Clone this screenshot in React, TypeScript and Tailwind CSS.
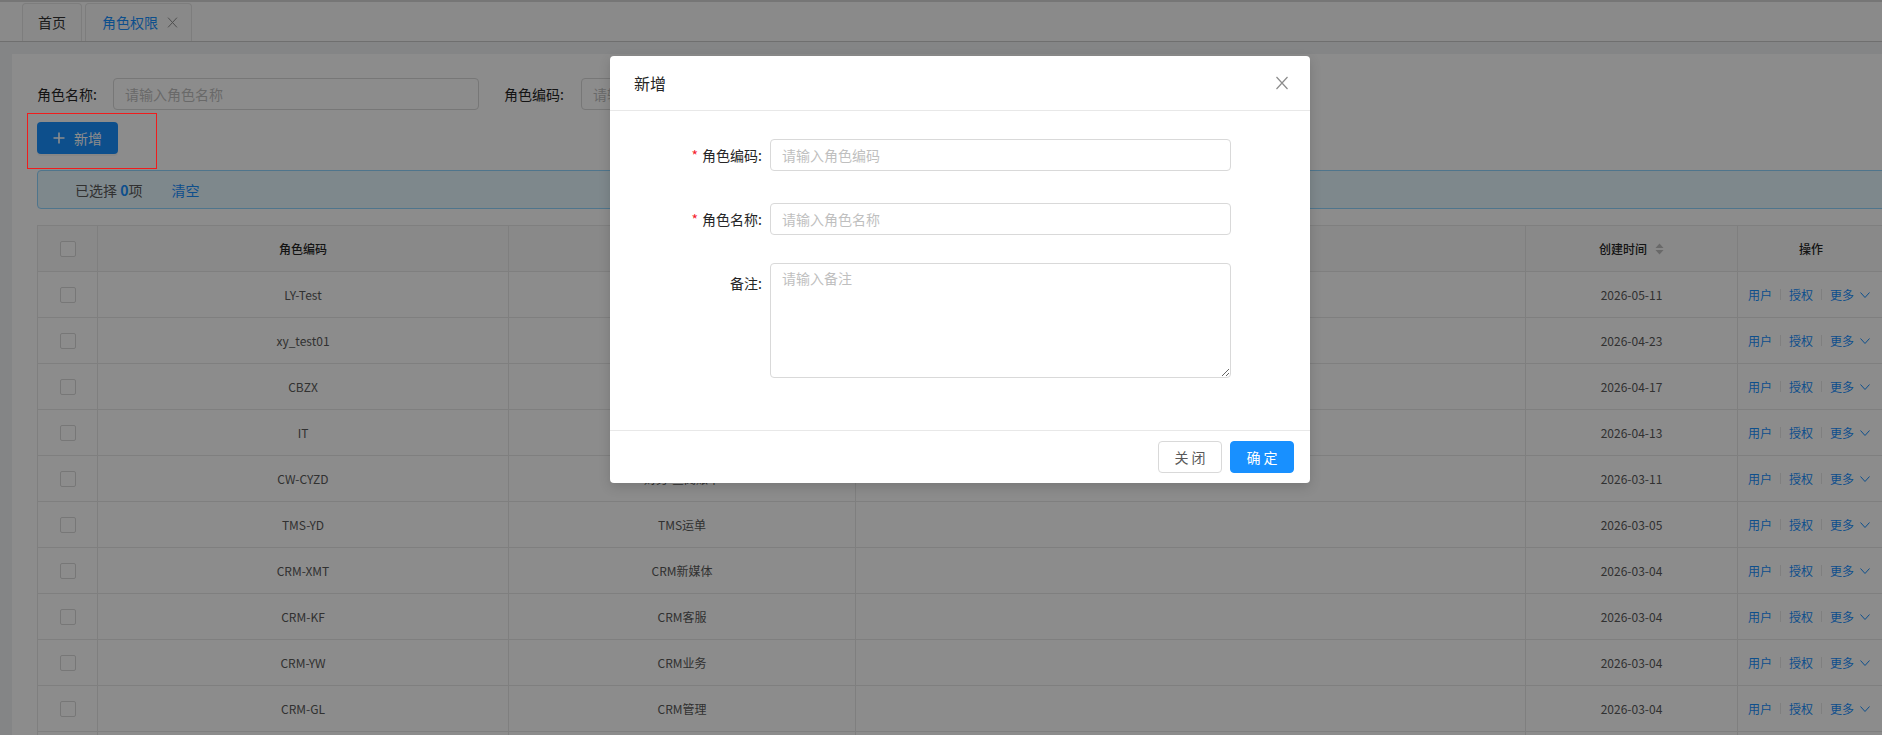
import React from "react";

interface RoleRow {
    code: string;
    name: string;
    desc?: string;
    time: string;
}

const rows: RoleRow[] = [
    { code: "LY-Test", name: "LY测试", time: "2026-05-11" },
    { code: "xy_test01", name: "xy测试", time: "2026-04-23" },
    { code: "CBZX", name: "成本中心", desc: "成本中心角色，负责成本核算、费用归集与成本分析报表的查看和导出", time: "2026-04-17" },
    { code: "IT", name: "IT", time: "2026-04-13" },
    { code: "CW-CYZD", name: "财务-查阅账单", time: "2026-03-11" },
    { code: "TMS-YD", name: "TMS运单", time: "2026-03-05" },
    { code: "CRM-XMT", name: "CRM新媒体", time: "2026-03-04" },
    { code: "CRM-KF", name: "CRM客服", time: "2026-03-04" },
    { code: "CRM-YW", name: "CRM业务", time: "2026-03-04" },
    { code: "CRM-GL", name: "CRM管理", time: "2026-03-04" },
    { code: "CRM-ZJ", name: "CRM总监", time: "2026-03-04" },
];

const Checkbox = () => (
    <span className="inline-block h-4 w-4 rounded-[2px] border border-[#d9d9d9] bg-white" />
);

const SortIcon = () => (
    <svg width="9" height="12" viewBox="0 0 9 12" className="ml-2">
        <path d="M4.5 0.5 L8.5 5 L0.5 5 Z" fill="#bfbfbf" />
        <path d="M4.5 11.5 L8.5 7 L0.5 7 Z" fill="#bfbfbf" />
    </svg>
);

const ChevronDown = () => (
    <svg width="10" height="6" viewBox="0 0 10 6" className="ml-1.5">
        <polyline points="0.5,0.5 5,5.5 9.5,0.5" fill="none" stroke="#1890ff" strokeWidth="1" />
    </svg>
);

const CloseIcon = ({ size, color }: { size: number; color: string }) => (
    <svg width={size} height={size} viewBox="0 0 16 16">
        <path d="M2.5 2 L13.5 14 M13.5 2 L2.5 14" stroke={color} strokeWidth="1.2" fill="none" />
    </svg>
);

const TableRow = ({ row }: { row: RoleRow }) => (
    <div className="flex h-[46px] border-b border-[#e8e8e8] text-xs text-[#595959]">
        <div className="flex w-[60px] shrink-0 items-center justify-center border-r border-[#e8e8e8]">
            <Checkbox />
        </div>
        <div className="flex w-[411px] shrink-0 items-center justify-center border-r border-[#e8e8e8]">{row.code}</div>
        <div className="flex w-[347px] shrink-0 items-center justify-center border-r border-[#e8e8e8]">{row.name}</div>
        <div className="flex w-[670px] shrink-0 items-center justify-center border-r border-[#e8e8e8]">
            {row.desc && <span className="inline-block max-w-[250px] truncate">{row.desc}</span>}
        </div>
        <div className="flex w-[212px] shrink-0 items-center justify-center border-r border-[#e8e8e8]">{row.time}</div>
        <div className="flex w-[146px] shrink-0 items-center justify-center pr-1 text-[#1890ff]">
            <span>用户</span>
            <span className="mx-2 h-[11px] w-px bg-[#e8e8e8]" />
            <span>授权</span>
            <span className="mx-2 h-[11px] w-px bg-[#e8e8e8]" />
            <span>更多</span>
            <ChevronDown />
        </div>
    </div>
);

const FormItem = ({ label, required, children, top }: { label: string; required?: boolean; children: React.ReactNode; top?: boolean }) => (
    <div className={`mb-6 flex ${top ? "items-start" : "items-center"}`}>
        <label className="flex h-10 w-[136px] shrink-0 items-center justify-end pr-2 text-sm text-[#262626]">
            {required && <span className="mr-1 text-sm text-[#f5222d]">*</span>}
            {label}:
        </label>
        <div className="w-[461px]">{children}</div>
    </div>
);

export default function App() {
    return (
        <div className="relative h-[735px] w-[1882px] overflow-hidden bg-[#f0f2f5] font-['Noto_Sans_CJK_SC','Noto_Sans',sans-serif]">
            {/* Tab bar */}
            <div className="flex h-[42px] items-end gap-[3px] border-t-2 border-b border-t-[#d7d7d7] border-b-[#cacaca] bg-[#fcfcfc] pl-[22px]">
                <div className="flex h-[38px] w-[60px] items-center justify-center rounded-t-[4px] border border-b-0 border-[#e3e3e3] bg-[#fafafa] pb-px text-sm text-[#333]">
                    首页
                </div>
                <div className="flex h-[38px] w-[107px] items-center rounded-t-[4px] border border-b-0 border-[#e3e3e3] bg-[#fafafa] pb-px pl-4 text-sm text-[#1890ff]">
                    角色权限
                    <span className="ml-2 flex items-center">
                        <CloseIcon size={13} color="#8c8c8c" />
                    </span>
                </div>
            </div>

            {/* Content */}
            <div className="pl-3 pt-3">
                <div className="w-[1900px] bg-white px-[25px] pt-6">
                    <div className="flex items-center text-sm text-[#262626]">
                        <span className="w-[76px] shrink-0">角色名称:</span>
                        <div className="flex h-8 w-[366px] items-center rounded-[4px] border border-[#d9d9d9] px-[11px] text-[#bfbfbf]">
                            请输入角色名称
                        </div>
                        <span className="ml-[25px] w-[77px] shrink-0">角色编码:</span>
                        <div className="flex h-8 w-[366px] items-center rounded-[4px] border border-[#d9d9d9] px-[11px] text-[#bfbfbf]">
                            请输入角色编码
                        </div>
                    </div>

                    <div className="mt-3">
                        <button className="flex h-8 w-[81px] items-center gap-2 rounded-[4px] bg-[#1890ff] pl-[15px] text-sm text-white shadow-[0_2px_0_rgba(0,0,0,0.045)]">
                            <svg width="14" height="14" viewBox="0 0 14 14">
                                <path d="M7 1.5 V12.5 M1.5 7 H12.5" stroke="white" strokeWidth="1.6" />
                            </svg>
                            新增
                        </button>
                    </div>

                    <div className="mt-4 flex h-[39px] w-[1850px] items-center rounded-[4px] border border-[#91d5ff] bg-[#e6f7ff] pl-[37px] text-sm text-[#595959]">
                        <span>
                            已选择 <span className="font-semibold text-[#1890ff]">0</span>项
                        </span>
                        <span className="ml-[29px] text-[#1890ff]">清空</span>
                    </div>

                    <div className="mt-4 w-[1847px] border-l border-t border-[#e8e8e8]">
                        <div className="flex h-[46px] border-b border-[#e8e8e8] bg-[#fafafa] text-xs font-medium text-[#262626]">
                            <div className="flex w-[60px] shrink-0 items-center justify-center border-r border-[#e8e8e8]">
                                <Checkbox />
                            </div>
                            <div className="flex w-[411px] shrink-0 items-center justify-center border-r border-[#e8e8e8]">角色编码</div>
                            <div className="flex w-[347px] shrink-0 items-center justify-center border-r border-[#e8e8e8]">角色名称</div>
                            <div className="flex w-[670px] shrink-0 items-center justify-center border-r border-[#e8e8e8]">描述</div>
                            <div className="flex w-[212px] shrink-0 items-center justify-center border-r border-[#e8e8e8]">
                                创建时间
                                <SortIcon />
                            </div>
                            <div className="flex w-[146px] shrink-0 items-center justify-center">操作</div>
                        </div>
                        {rows.map(row => (
                            <TableRow key={row.code} row={row} />
                        ))}
                    </div>
                </div>
            </div>

            {/* Mask */}
            <div className="absolute inset-0 z-10 bg-black/45" />

            {/* Annotation box */}
            <div className="absolute left-[27px] top-[113px] z-30 h-[56px] w-[130px] border border-[#f01c1c]" />

            {/* Modal */}
            <div className="absolute left-[610px] top-[56px] z-20 w-[700px] rounded-[4px] bg-white shadow-[0_4px_12px_rgba(0,0,0,0.15)]">
                <div className="flex h-[55px] items-center justify-between border-b border-[#e8e8e8] pl-6 pr-5">
                    <span className="text-base leading-[22px] text-[#262626]">新增</span>
                    <CloseIcon size={16} color="#8c8c8c" />
                </div>
                <div className="px-6 pb-[28px] pt-6">
                    <FormItem label="角色编码" required>
                        <div className="flex h-8 items-center rounded-[4px] border border-[#d9d9d9] px-[11px] text-sm text-[#bfbfbf]">
                            请输入角色编码
                        </div>
                    </FormItem>
                    <FormItem label="角色名称" required>
                        <div className="flex h-8 items-center rounded-[4px] border border-[#d9d9d9] px-[11px] text-sm text-[#bfbfbf]">
                            请输入角色名称
                        </div>
                    </FormItem>
                    <FormItem label="备注" top>
                        <textarea
                            rows={5}
                            placeholder="请输入备注"
                            className="block h-[115px] w-full resize-y rounded-[4px] border border-[#d9d9d9] px-[11px] py-1 text-sm leading-[21px] outline-none placeholder:text-[#bfbfbf]"
                        />
                    </FormItem>
                </div>
                <div className="flex justify-end gap-2 border-t border-[#e8e8e8] px-4 py-[10px]">
                    <button className="h-8 w-16 rounded-[4px] border border-[#d9d9d9] bg-white text-sm text-[#595959]">关 闭</button>
                    <button className="h-8 w-16 rounded-[4px] border border-[#1890ff] bg-[#1890ff] text-sm text-white">确 定</button>
                </div>
            </div>
        </div>
    );
}
